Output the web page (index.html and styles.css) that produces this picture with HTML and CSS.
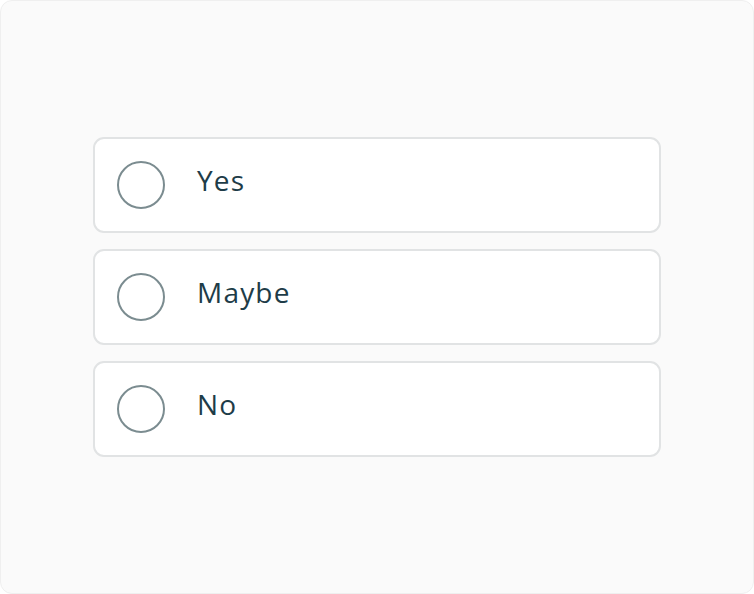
FILE: index.html
```html
<!DOCTYPE html>
<html>
<head>
    <title>Choice</title>
    <link rel="stylesheet" href="styles.css">
</head>
<body>
    <div class="panel">
        <div class="options">
            <label class="option">
                <span class="radio"></span>
                <span class="option-label">Yes</span>
            </label>
            <label class="option">
                <span class="radio"></span>
                <span class="option-label">Maybe</span>
            </label>
            <label class="option">
                <span class="radio"></span>
                <span class="option-label">No</span>
            </label>
        </div>
    </div>
</body>
</html>
```

FILE: styles.css
```css
html, body {
    margin: 0;
    padding: 0;
}

body {
    font-family: 'Open Sans', 'Noto Sans', sans-serif;
    color: #1e3c48;
}

.panel {
    box-sizing: border-box;
    width: 754px;
    height: 594px;
    background-color: #fafafa;
    border: 1px solid #efefef;
    border-radius: 12px;
    display: flex;
    align-items: center;
    justify-content: center;
}

.options {
    display: flex;
    flex-direction: column;
    gap: 16px;
    width: 568px;
}

.option {
    box-sizing: border-box;
    height: 96px;
    display: flex;
    align-items: center;
    padding-left: 22px;
    background-color: #fff;
    border: 2px solid #e1e3e4;
    border-radius: 11px;
    cursor: pointer;
}

.radio {
    box-sizing: border-box;
    width: 48px;
    height: 48px;
    border: 2px solid #7b8c90;
    border-radius: 50%;
    flex-shrink: 0;
}

.option-label {
    margin-left: 32px;
    font-size: 28px;
    font-weight: 500;
    letter-spacing: 1.2px;
    line-height: 1;
    margin-top: -11px;
}
```
